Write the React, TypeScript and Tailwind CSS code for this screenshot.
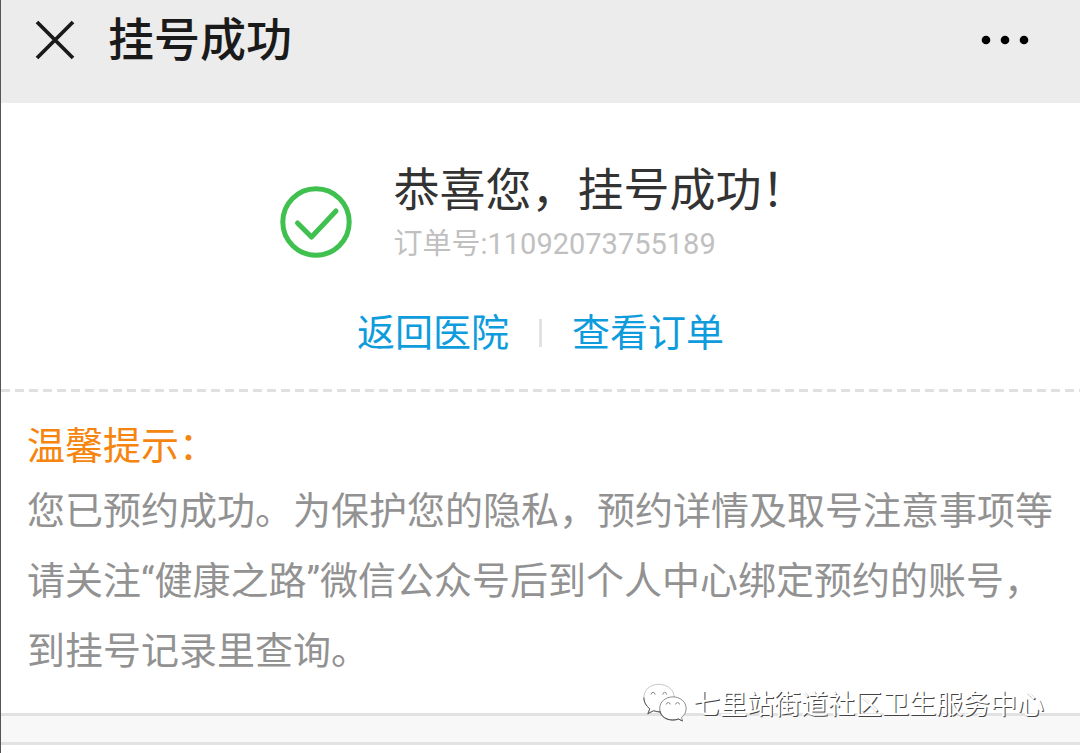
import React from 'react';

const links = [
  { label: '返回医院', href: '#hospital' },
  { label: '查看订单', href: '#order' },
];

const CloseIcon: React.FC = () => (
  <svg width="40" height="40" viewBox="0 0 40 40" fill="none" stroke="#1a1a1a" strokeWidth="3.8" aria-hidden="true">
    <path d="M2 2L38 38M38 2L2 38" />
  </svg>
);

const MoreIcon: React.FC = () => (
  <svg width="48" height="10" viewBox="0 0 48 10" fill="#000" aria-hidden="true">
    <circle cx="5" cy="5" r="4.3" />
    <circle cx="24" cy="5" r="4.3" />
    <circle cx="43" cy="5" r="4.3" />
  </svg>
);

const SuccessIcon: React.FC = () => (
  <svg
    className="shrink-0"
    width="72"
    height="72"
    viewBox="0 0 72 72"
    fill="none"
    stroke="#3fc04f"
    strokeWidth="5"
    strokeLinecap="round"
    strokeLinejoin="round"
    aria-hidden="true"
  >
    <circle cx="36" cy="36" r="33.2" />
    <path d="M17.5 37L31.5 51L56 25" />
  </svg>
);

const WechatIcon: React.FC = () => (
  <svg width="46" height="39" viewBox="38 38 138 118" fill="#fff" stroke="#555" strokeWidth="2" aria-hidden="true">
    <path d="M88 42C62 42 43 59 43 82C43 96 50 108 61 116L55 131L72 122C78 125 83 126 92 126C118 126 135 108 135 82C135 59 114 42 88 42Z" stroke="#aaa" />
    <path d="M43 82C43 96 50 108 61 116L55 131L72 122L92 126" fill="none" strokeWidth="3" />
    <path d="M65 73Q66 66 71 66Q76 66 77 73M100 73Q101 66 106 66Q111 66 112 73" fill="none" />
    <path d="M131 80C108 80 91 95 91 115C91 135 108 150 131 150C137 150 143 149 148 147L160 153L157 142C166 135 171 126 171 115C171 95 153 80 131 80Z" />
    <path d="M91 122C95 140 110 150 131 150C137 150 143 149 148 147L160 153" fill="none" strokeWidth="3" />
    <path d="M111 103Q112 97 117 97Q122 97 123 103M139 103Q140 97 145 97Q150 97 151 103" fill="none" />
  </svg>
);

export const RegistrationSuccess: React.FC = () => {
  return (
    <div
      lang="zh-CN"
      className="relative min-h-screen border-l border-[#555] bg-white font-[Roboto,'Noto_Sans_CJK_SC',sans-serif]"
    >
      {/* Title bar */}
      <header className="flex items-start justify-between bg-[#ececec] pt-2 pr-[51px] pb-[31px] pl-[34px]">
        <div className="flex items-center gap-[33px]">
          <button type="button" aria-label="关闭">
            <CloseIcon />
          </button>
          <h1 className="text-[46px] leading-[64px] font-medium text-[#1a1a1a]">挂号成功</h1>
        </div>
        <button type="button" aria-label="更多" className="flex h-16 items-center">
          <MoreIcon />
        </button>
      </header>

      <main>
        {/* Result */}
        <section className="pt-[53px]">
          <div className="flex items-end justify-center gap-[42px] pl-[6px]">
            <SuccessIcon />
            <div className="flex flex-col gap-[6px]">
              <h2 className="text-[46px] leading-[68px] text-[#333]">恭喜您，挂号成功！</h2>
              <p className="text-[29px] leading-7 text-[#c0c0c0]">订单号:11092073755189</p>
            </div>
          </div>

          <nav className="flex items-center justify-center gap-[30px] pt-[47px] pb-7">
            <a href={links[0].href} className="text-[38px] leading-[56px] text-[#0e9cdc]">
              {links[0].label}
            </a>
            <span className="h-7 w-[3px] bg-[#e2e2e2]" />
            <a href={links[1].href} className="text-[38px] leading-[56px] text-[#0e9cdc]">
              {links[1].label}
            </a>
          </nav>
        </section>

        <div className="h-[3px] bg-[repeating-linear-gradient(to_right,#e0e0e0_0_9px,transparent_9px_14px)]" />

        {/* Tips */}
        <section className="px-[26px] pt-6 pb-[27px] text-[38px]">
          <h3 className="leading-[60px] text-[#f5850f]">温馨提示：</h3>
          <p className="leading-[70px] text-[#929292]">
            您已预约成功。为保护您的隐私，预约详情及取号注意事项等请关注“健康之路”微信公众号后到个人中心绑定预约的账号，到挂号记录里查询。
          </p>
        </section>
      </main>

      <div className="h-8 border-y-[3px] border-[#e2e2e2] bg-[#f8f8f8]" />

      {/* Account watermark */}
      <div className="absolute right-9 bottom-[26px] flex items-start gap-[5px]">
        <WechatIcon />
        <span className="text-[27px] leading-[44px] text-white [text-shadow:1px_1px_0_#444]">
          七里站街道社区卫生服务中心
        </span>
      </div>
    </div>
  );
};

export default RegistrationSuccess;
